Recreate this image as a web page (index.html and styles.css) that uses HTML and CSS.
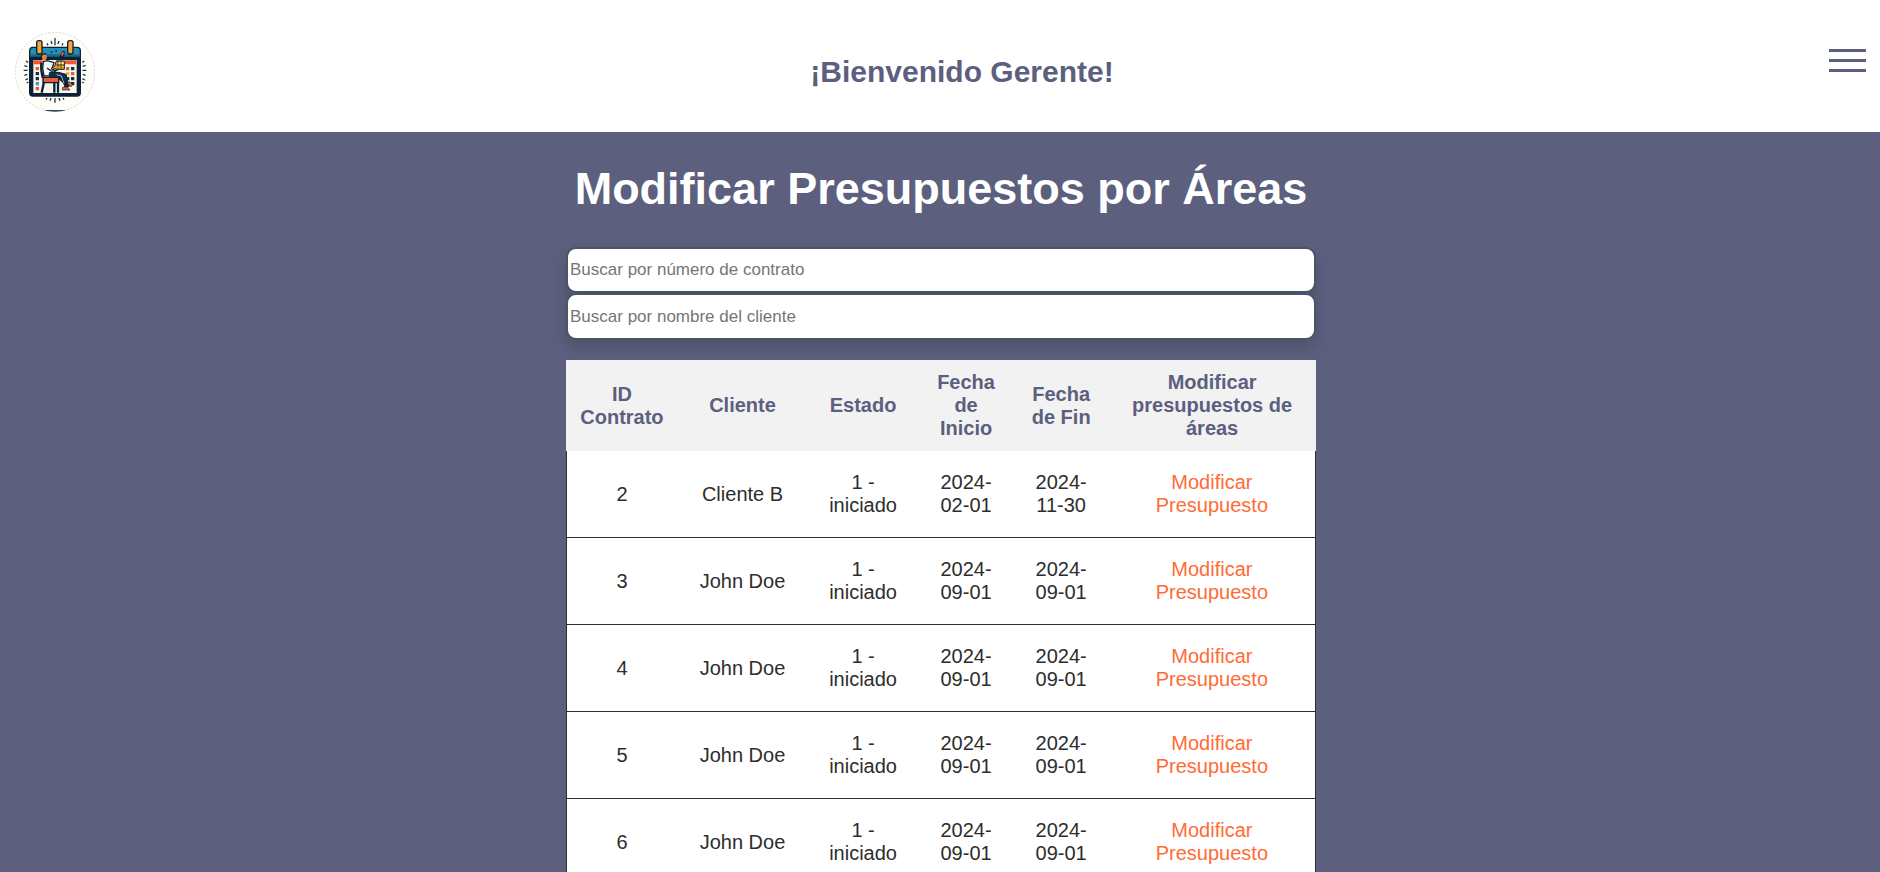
FILE: index.html
```html
<!DOCTYPE html>
<html lang="es">
<head>
<meta charset="utf-8">
<title>Modificar Presupuestos por Áreas</title>
<link rel="stylesheet" href="styles.css">
</head>
<body>
<header class="header">
  <svg class="logo" viewBox="45 36 240 240" role="img" aria-label="Logo">
    <defs><clipPath id="disc"><circle cx="165" cy="156" r="119"/></clipPath></defs>
    <circle cx="165" cy="156" r="119" fill="#fdfef8" stroke="#c9c9cd" stroke-width="2" stroke-dasharray="7 4"/>
    <path clip-path="url(#disc)" d="M125 270h80v8h-80z" fill="#3b4355"/>
    <g stroke="#24384a" stroke-width="4" fill="none">
      <path d="M165 54v22M153 63l3 9M177 63l-3 9M141 70l3 6M189 70l-3 6M165 234v14M153 234l-3 8M177 234l3 8M141 234l-3 5M189 234l3 5"/>
      <path d="M71 151h12M73 137l9 3M73 166l9-3M78 123l6 4M76 180l8-4M80 189l5-3M247 151h12M248 139l9-3M248 163l9 3M247 127l6-4M247 176l8 4M246 186l5 3"/>
    </g>
    <rect x="87" y="80" width="156" height="150" rx="12" fill="#0c2136"/>
    <path d="M100 118h130v101H100z" fill="#fbf7ee"/>
    <path d="M91 92q0-8 8-8h132q8 0 8 8v18H91z" fill="#2490b8"/>
    <path d="M91 103h148v7H91z" fill="#176a8d"/>
    <path d="M87 110h156v10H87z" fill="#0c2136"/>
    <path d="M100 121h28v12h-28zM194 121h35v12h-35z" fill="#e95c32"/>
    <g stroke="#0c2136" stroke-width="4">
      <rect x="110" y="62" width="16" height="40" rx="6" fill="#f5a830"/>
      <rect x="203" y="62" width="16" height="40" rx="6" fill="#f5a830"/>
    </g>
    <g fill="#183047"><path d="M107 156h10v10h-10zM107 171h10v10h-10zM213 141h10v10h-10zM198 171h10v10h-10zM213 171h10v10h-10zM213 186h10v10h-10zM152 94h5v5h-5zM166 91h5v5h-5z"/></g>
    <g fill="#e95c32"><path d="M107 141h10v10h-10zM107 201h10v10h-10zM198 141h10v10h-10zM213 156h10v10h-10z"/></g>
    <path d="M107 186h10v10h-10z" fill="#2aa5cc"/>
    <path d="M198 156h10v10h-10z" fill="#f5b52d"/>
    <path d="M124 128q-2 26 5 46M132 186l-7 32M163 188v30M174 188v30" stroke="#0c2136" stroke-width="7" fill="none"/>
    <path d="M130 125l12-3 20 6-6 17 10 8-12 14-22 1-4-24z" fill="#f8f7f2" stroke="#0c2136" stroke-width="4"/>
    <path d="M141 144l14 10 18-4" fill="none" stroke="#0c2136" stroke-width="4"/>
    <path d="M148 158l28-1 22 6 9 37-12 2-9-28-12-3-26 1z" fill="#143050" stroke="#0c2136" stroke-width="3"/>
    <path d="M176 172l28 24" stroke="#0c2136" stroke-width="9"/>
    <path d="M170 164l14 4 8 22" stroke="#f8f7f2" stroke-width="2" fill="none"/>
    <path d="M129 172h47v16h-47z" fill="#ed5c30" stroke="#0c2136" stroke-width="4"/>
    <path d="M188 202l14-1 8 9h-23zM202 190l8-5 8 9-6 7z" fill="#eb5e34" stroke="#0c2136" stroke-width="2"/>
    <path d="M126 109q2-7 9-6 7 2 5 11l-4 9-9-3z" fill="#f08033"/>
    <path d="M123 111q2-12 16-9" fill="none" stroke="#0c2136" stroke-width="4"/>
    <path d="M168 121l10-10 9-18 8 1-2 12-10 15z" fill="#0c2136"/>
    <path d="M187 95l6 3-6 11-4-3z" fill="#e95c32"/>
    <path d="M155 144l9-5 5-16h24v25h-21l-9-2-7 4z" fill="#f1ac2c" stroke="#0c2136" stroke-width="3"/>
    <path d="M174 122v25M183 122v25M168 135h26" stroke="#0c2136" stroke-width="2"/>
    <path d="M176 127h5v5h-5zM185 127h6v5h-6z" fill="#fff2c2"/>
  </svg>
  <h2 class="welcome">¡Bienvenido Gerente!</h2>
  <button class="menu" type="button" aria-label="Abrir menú">
    <span class="menu-line"></span>
    <span class="menu-line"></span>
    <span class="menu-line"></span>
  </button>
</header>
<main class="content">
  <h1 class="title">Modificar Presupuestos por Áreas</h1>
  <div class="filters">
    <input class="search" type="text" aria-label="Número de contrato" placeholder="Buscar por número de contrato">
    <input class="search" type="text" aria-label="Nombre del cliente" placeholder="Buscar por nombre del cliente">
  </div>
  <table class="contracts">
    <colgroup>
      <col class="col-id"><col class="col-client"><col class="col-state"><col class="col-start"><col class="col-end"><col>
    </colgroup>
    <thead>
      <tr><th>ID Contrato</th><th>Cliente</th><th>Estado</th><th>Fecha de Inicio</th><th>Fecha de Fin</th><th>Modificar presupuestos de áreas</th></tr>
    </thead>
    <tbody>
      <tr><td>2</td><td>Cliente B</td><td>1 - iniciado</td><td>2024-02-01</td><td>2024-11-30</td><td><a class="edit" href="#">Modificar Presupuesto</a></td></tr>
      <tr><td>3</td><td>John Doe</td><td>1 - iniciado</td><td>2024-09-01</td><td>2024-09-01</td><td><a class="edit" href="#">Modificar Presupuesto</a></td></tr>
      <tr><td>4</td><td>John Doe</td><td>1 - iniciado</td><td>2024-09-01</td><td>2024-09-01</td><td><a class="edit" href="#">Modificar Presupuesto</a></td></tr>
      <tr><td>5</td><td>John Doe</td><td>1 - iniciado</td><td>2024-09-01</td><td>2024-09-01</td><td><a class="edit" href="#">Modificar Presupuesto</a></td></tr>
      <tr><td>6</td><td>John Doe</td><td>1 - iniciado</td><td>2024-09-01</td><td>2024-09-01</td><td><a class="edit" href="#">Modificar Presupuesto</a></td></tr>
    </tbody>
  </table>
</main>
</body>
</html>
```
FILE: styles.css
```css
* {
  box-sizing: border-box;
}

body {
  margin: 0;
  background: #5c5f7e;
  color: #2d2d2d;
  font-family: "Liberation Sans", Arial, sans-serif;
}

.header {
  display: flex;
  justify-content: space-between;
  align-items: center;
  padding: 32px 14px 20px 15px;
  background: #fff;
  color: #5c5f7e;
}

.logo {
  width: 80px;
  height: 80px;
}

.welcome {
  margin: 0;
  font-size: 30px;
}

.menu {
  display: flex;
  flex-direction: column;
  align-self: flex-start;
  gap: 7px;
  margin: 17px 0 0;
  padding: 0;
  border: 0;
  background: none;
  cursor: pointer;
}

.menu-line {
  width: 37px;
  height: 3px;
  background: #5c5f7e;
}

.content {
  display: flex;
  flex-direction: column;
  align-items: center;
  padding: 31px 0 0 2px;
}

.title {
  margin: 0 0 32px;
  color: #fff;
  font-size: 45px;
  line-height: 52px;
  text-align: center;
}

.filters {
  display: flex;
  flex-direction: column;
  width: 100%;
  max-width: 750px;
  margin-bottom: 20px;
}

.search {
  height: 46px;
  padding: 1px 2px;
  border: 2px solid #4a5568;
  border-radius: 10px;
  background: #fff;
  box-shadow: 0 8px 16px rgba(0, 0, 0, 0.15);
  font-family: inherit;
  font-size: 17px;
}

.search:last-child {
  height: 47px;
}

.search::placeholder {
  color: #757575;
}

.contracts {
  width: 100%;
  max-width: 750px;
  table-layout: fixed;
  border: 1px solid #2d2d2d;
  border-top: 0;
  border-spacing: 0;
  border-collapse: collapse;
  background: #fff;
  font-size: 20px;
  line-height: 23px;
  text-align: center;
}

.col-id,
.col-state {
  width: 14.8%;
}

.col-client {
  width: 17.4%;
}

.col-start,
.col-end {
  width: 12.7%;
}

.contracts th {
  padding: 10px;
  border: 1px solid #f2f2f2;
  background: #f2f2f2;
  color: #5c5f7e;
}

.contracts td {
  padding: 20px;
  border-bottom: 1px solid #2d2d2d;
}

.edit {
  color: #ff6b35;
  text-decoration: none;
}
```
